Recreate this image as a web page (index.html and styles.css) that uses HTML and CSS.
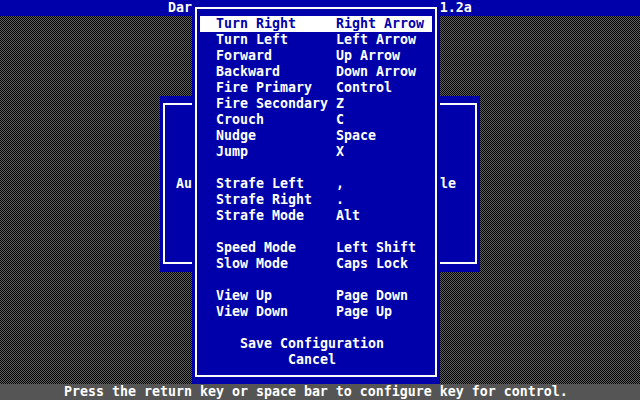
FILE: index.html
```html
<!DOCTYPE html>
<html lang="en">
<head>
    <meta charset="UTF-8">
    <title>Dark Forces Setup</title>
    <link rel="stylesheet" href="styles.css">
</head>
<body>
    <div class="screen">
        <div class="titlebar">Dark Forces Setup Program version 1.2a</div>
        <div class="desktop"></div>
        <div class="statusbar">Press the return key or space bar to configure key for control.</div>

        <!-- main setup menu, mostly hidden behind the key list -->
        <div class="window main-menu">
            <div class="frame">
                <div class="menu-row"><span>Au</span><span>le</span></div>
            </div>
        </div>

        <!-- key configuration list -->
        <div class="window keys">
            <div class="frame">
                <ul class="key-list">
                    <li class="selected"><span class="action">Turn Right</span><span>Right Arrow</span></li>
                    <li><span class="action">Turn Left</span><span>Left Arrow</span></li>
                    <li><span class="action">Forward</span><span>Up Arrow</span></li>
                    <li><span class="action">Backward</span><span>Down Arrow</span></li>
                    <li><span class="action">Fire Primary</span><span>Control</span></li>
                    <li><span class="action">Fire Secondary</span><span>Z</span></li>
                    <li><span class="action">Crouch</span><span>C</span></li>
                    <li><span class="action">Nudge</span><span>Space</span></li>
                    <li><span class="action">Jump</span><span>X</span></li>
                    <li class="gap"></li>
                    <li><span class="action">Strafe Left</span><span>,</span></li>
                    <li><span class="action">Strafe Right</span><span>.</span></li>
                    <li><span class="action">Strafe Mode</span><span>Alt</span></li>
                    <li class="gap"></li>
                    <li><span class="action">Speed Mode</span><span>Left Shift</span></li>
                    <li><span class="action">Slow Mode</span><span>Caps Lock</span></li>
                    <li class="gap"></li>
                    <li><span class="action">View Up</span><span>Page Down</span></li>
                    <li><span class="action">View Down</span><span>Page Up</span></li>
                    <li class="gap"></li>
                    <li class="command">Save Configuration</li>
                    <li class="command">Cancel</li>
                </ul>
            </div>
        </div>
    </div>
</body>
</html>
```

FILE: styles.css
```css
body {
    margin: 0;
    padding: 0;
    background: #000;
    font-family: "DejaVu Sans Mono", "Liberation Mono", monospace;
    font-weight: bold;
    font-size: 13.29px;
    color: #fff;
}
.screen {
    position: relative;
    width: 640px;
    height: 400px;
    display: flex;
    flex-direction: column;
    overflow: hidden;
}
.titlebar {
    height: 16px;
    line-height: 16px;
    background: #0000aa;
    padding-left: 168px;
    white-space: pre;
}
/* 1px dither: two stripe patterns combined with difference blending */
.desktop {
    flex: 1;
    background-image:
        linear-gradient(90deg, #606060 1px, #000 1px),
        linear-gradient(#606060 1px, #000 1px);
    background-size: 2px 2px;
    background-blend-mode: difference;
}
.statusbar {
    height: 16px;
    line-height: 16px;
    background: #555555;
    padding-left: 64px;
    white-space: pre;
}
.window {
    position: absolute;
    background: #0000aa;
    box-sizing: border-box;
}
.frame {
    height: 100%;
    border: 2px solid #fff;
    box-sizing: border-box;
}
.main-menu {
    left: 160px;
    top: 96px;
    width: 320px;
    height: 176px;
    padding: 7px 3px 8px;
}
.menu-row {
    display: flex;
    justify-content: space-between;
    height: 16px;
    line-height: 16px;
    margin-top: 71px;
    padding: 0 19px 0 11px;
}
.keys {
    left: 192px;
    top: 0;
    width: 248px;
    height: 384px;
    padding: 7px 3px;
}
.key-list {
    list-style: none;
    margin: 0;
    padding: 7px 3px 0;
}
.key-list li {
    display: flex;
    height: 16px;
    line-height: 16px;
    padding-left: 16px;
    white-space: pre;
}
.key-list .action {
    width: 120px;
}
.key-list .selected {
    background: #fff;
    color: #0000aa;
}
.key-list .command {
    justify-content: center;
    padding: 0 8px 0 0;
}
```
